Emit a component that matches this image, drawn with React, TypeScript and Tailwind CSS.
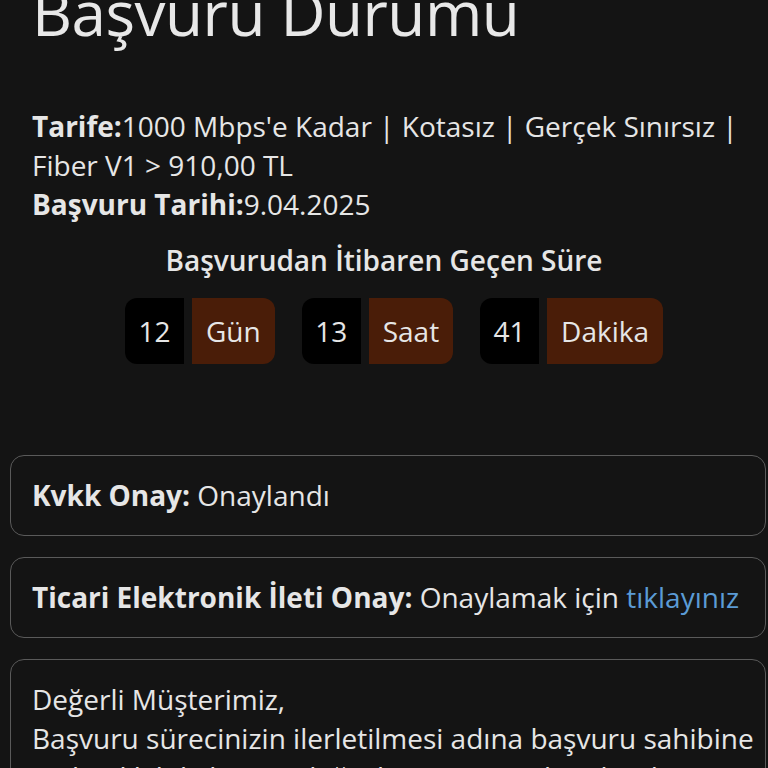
import React from "react";

const timer = [
  { value: "12", label: "Gün" },
  { value: "13", label: "Saat" },
  { value: "41", label: "Dakika" },
];

export default function App() {
  return (
    <div className="min-h-[768px] bg-[#141414] text-[#e6e6e6] font-['Open_Sans',sans-serif] overflow-hidden">
      <div className="-mt-[28px]">
        <h1 className="px-[32px] text-[62px] leading-[80px] font-normal text-[#e8e8e8] tracking-[-0.5px]">Başvuru Durumu</h1>

        <div className="pl-[32px] pr-[20px] mt-[55px] text-[28px] leading-[39px]">
          <p><span className="font-bold">Tarife:</span>1000 Mbps'e Kadar | Kotasız | Gerçek Sınırsız | Fiber V1 &gt; 910,00 TL</p>
          <p><span className="font-bold">Başvuru Tarihi:</span>9.04.2025</p>
        </div>

        <div className="mt-[17px] flex flex-col items-center">
          <h2 className="text-[28px] leading-[39px] font-semibold">Başvurudan İtibaren Geçen Süre</h2>
          <div className="mt-[18px] flex gap-[27px] ml-[20px]">
            {timer.map((t) => (
              <div key={t.label} className="flex gap-[8px] h-[66px] text-[28px]">
                <div className="bg-black rounded-l-[12px] w-[59px] flex items-center justify-center">{t.value}</div>
                <div className="bg-[#4a1d08] rounded-r-[12px] px-[14px] flex items-center">{t.label}</div>
              </div>
            ))}
          </div>
        </div>

        <div className="mt-[91px] ml-[10px] w-[756px] space-y-[21px] text-[28px] leading-[39px]">
          <div className="border-[1.5px] border-[#5a5a5a] rounded-[14px] pl-[21px] pr-[8px] py-[20px]">
            <span className="font-bold">Kvkk Onay:</span> Onaylandı
          </div>
          <div className="border-[1.5px] border-[#5a5a5a] rounded-[14px] pl-[21px] pr-[8px] py-[20px]">
            <span className="font-bold">Ticari Elektronik İleti Onay:</span> Onaylamak için <a className="text-[#5b9bd5]">tıklayınız</a>
          </div>
          <div className="border-[1.5px] border-[#5a5a5a] rounded-[14px] pl-[21px] pr-[8px] py-[20px]">
            <p>Değerli Müşterimiz,</p>
            <p>Başvuru sürecinizin ilerletilmesi adına başvuru sahibine ait kimlik bilgilerinin doğrulanması gerekmektedir.</p>
          </div>
        </div>
      </div>
    </div>
  );
}
